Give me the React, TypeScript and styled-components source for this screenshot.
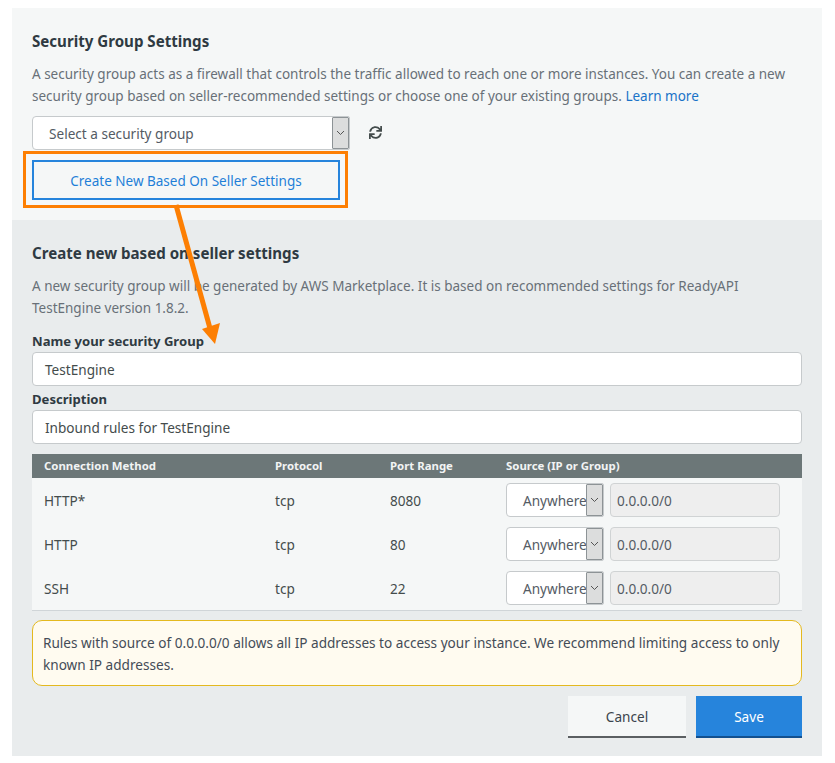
import React from 'react';
import styled, { createGlobalStyle } from 'styled-components';
import { FaSync } from 'react-icons/fa';

const GlobalStyle = createGlobalStyle`
  html, body {
    margin: 0;
    padding: 0;
    background: #fff;
  }
  body {
    font-family: "Noto Sans", "Open Sans", sans-serif;
    font-size: 13.6px;
    color: #444c4c;
  }
`;

const Page = styled.div`
  position: relative;
  width: 835px;
  height: 763px;
  padding: 8px 13px 7px 12px;
  box-sizing: border-box;
  overflow: hidden;
`;

const TopSection = styled.section`
  height: 212px;
  box-sizing: border-box;
  padding: 22px 20px 0;
  background: #f5f7f7;
`;

const BottomSection = styled.section`
  height: 536px;
  box-sizing: border-box;
  padding: 22px 20px 0;
  background: #e9eced;
`;

const Heading = styled.h2`
  margin: 0;
  font-size: 15.1px;
  line-height: 22px;
  font-weight: 700;
  color: #2f3a42;
`;

const Paragraph = styled.p`
  margin: 11px 0 0;
  font-size: 13.5px;
  line-height: 22px;
  color: #687078;
`;

const LearnMore = styled.a`
  color: #1a73c8;
  text-decoration: none;
`;

const GroupRow = styled.div`
  display: flex;
  align-items: center;
  margin-top: 9px;
`;

const SelectBox = styled.div<{ $width: number }>`
  display: flex;
  width: ${p => p.$width}px;
  height: 34px;
  box-sizing: border-box;
  background: #fff;
  border: 1px solid #c6cacc;
  border-radius: 4px 2px 2px 4px;
  overflow: hidden;
`;

const SelectText = styled.span<{ $inset: number }>`
  flex: 1;
  padding-left: ${p => p.$inset}px;
  font-size: 13.6px;
  line-height: 34px;
  color: #545b64;
  white-space: nowrap;
  overflow: hidden;
`;

const SelectCaret = styled.span`
  display: flex;
  flex: none;
  align-items: center;
  justify-content: center;
  width: 15px;
  background: #dcdddd;
  border: 1px solid #8d9396;
  border-radius: 1px;
`;

const RefreshButton = styled.span`
  display: flex;
  margin-left: 19px;
  margin-top: -2px;
  color: #444c4c;
`;

const OutlineButton = styled.button`
  display: block;
  width: 308px;
  height: 40px;
  margin-top: 10px;
  padding: 2px 0 0;
  background: transparent;
  border: 2px solid #2684dc;
  font-family: inherit;
  font-size: 13.5px;
  color: #1f7fd8;
`;

const FieldLabel = styled.label`
  display: block;
  font-size: 13.1px;
  line-height: 20px;
  font-weight: 700;
  color: #2f3a42;
`;

const FieldInput = styled.div`
  height: 34px;
  margin-top: 1px;
  padding-left: 12px;
  box-sizing: border-box;
  background: #fff;
  border: 1px solid #c6cacc;
  border-radius: 4px;
  font-size: 13.6px;
  line-height: 33px;
  color: #444c4c;
`;

const Field = styled.div<{ $top: number }>`
  margin-top: ${p => p.$top}px;
`;

const RulesTable = styled.div`
  margin-top: 10px;
  background: #f5f7f7;
  border-bottom: 1px solid #d0d5d8;
`;

const gridColumns = `231px 115px 116px 1fr`;

const TableHead = styled.div`
  display: grid;
  grid-template-columns: ${gridColumns};
  height: 24px;
  padding-left: 12px;
  background: #6c7778;
  font-size: 11.4px;
  line-height: 24px;
  font-weight: 700;
  color: #f2f4f4;
`;

const TableRow = styled.div`
  display: grid;
  grid-template-columns: ${gridColumns};
  align-items: center;
  height: 44px;
  padding-left: 12px;
  font-size: 13.6px;
  color: #444c4c;
`;

const SourceCell = styled.div`
  display: flex;
  gap: 6px;
`;

const ReadonlyInput = styled.div`
  width: 170px;
  height: 34px;
  padding-left: 6px;
  box-sizing: border-box;
  background: #eeeeee;
  border: 1px solid #d0d3d4;
  border-radius: 4px;
  font-size: 13.6px;
  line-height: 33px;
  color: #545b64;
`;

const Notice = styled.div`
  margin-top: 9px;
  padding: 11px 10px 9px;
  height: 66px;
  box-sizing: border-box;
  background: #fffbf0;
  border: 1px solid #e4b91f;
  border-radius: 10px;
  font-size: 13.6px;
  line-height: 22px;
  color: #444c57;
`;

const Actions = styled.div`
  display: flex;
  justify-content: flex-end;
  gap: 10px;
  margin-top: 10px;
`;

const ActionButton = styled.button<{ $primary?: boolean }>`
  height: 42px;
  width: ${p => (p.$primary ? 106 : 118)}px;
  padding: 0;
  border: 0;
  border-bottom: 2px solid ${p => (p.$primary ? '#12508f' : '#5b5f62')};
  background: ${p => (p.$primary ? '#2684dc' : '#f5f7f7')};
  color: ${p => (p.$primary ? '#fff' : '#3b444c')};
  font-family: inherit;
  font-size: 13.6px;
`;

const Highlight = styled.div`
  position: absolute;
  left: 23px;
  top: 151px;
  width: 325px;
  height: 57px;
  box-sizing: border-box;
  border: 3px solid #fd7f03;
  pointer-events: none;
`;

const ArrowLayer = styled.svg`
  position: absolute;
  left: 0;
  top: 0;
  pointer-events: none;
`;

const Caret = () => (
  <svg width="9" height="6" viewBox="0 0 9 6" fill="none" stroke="#555" strokeWidth="1">
    <path d="M1 1l3.5 3.5L8 1" />
  </svg>
);

const rules = [
  { method: 'HTTP*', protocol: 'tcp', port: '8080' },
  { method: 'HTTP', protocol: 'tcp', port: '80' },
  { method: 'SSH', protocol: 'tcp', port: '22' },
];

export default function App() {
  return (
    <>
      <GlobalStyle />
      <Page>
        <TopSection>
          <Heading>Security Group Settings</Heading>
          <Paragraph>
            A security group acts as a firewall that controls the traffic allowed to reach one or more instances. You can create a new
            security group based on seller-recommended settings or choose one of your existing groups. <LearnMore>Learn more</LearnMore>
          </Paragraph>
          <GroupRow>
            <SelectBox $width={318}>
              <SelectText $inset={16}>Select a security group</SelectText>
              <SelectCaret><Caret /></SelectCaret>
            </SelectBox>
            <RefreshButton><FaSync size={13} /></RefreshButton>
          </GroupRow>
          <OutlineButton>Create New Based On Seller Settings</OutlineButton>
        </TopSection>
        <BottomSection>
          <Heading>Create new based on seller settings</Heading>
          <Paragraph>
            A new security group will be generated by AWS Marketplace. It is based on recommended settings for ReadyAPI
            <br />
            TestEngine version 1.8.2.
          </Paragraph>
          <Field $top={12}>
            <FieldLabel>Name your security Group</FieldLabel>
            <FieldInput>TestEngine</FieldInput>
          </Field>
          <Field $top={3}>
            <FieldLabel>Description</FieldLabel>
            <FieldInput>Inbound rules for TestEngine</FieldInput>
          </Field>
          <RulesTable>
            <TableHead>
              <span>Connection Method</span>
              <span>Protocol</span>
              <span>Port Range</span>
              <span>Source (IP or Group)</span>
            </TableHead>
            {rules.map(rule => (
              <TableRow key={rule.method}>
                <span>{rule.method}</span>
                <span>{rule.protocol}</span>
                <span>{rule.port}</span>
                <SourceCell>
                  <SelectBox $width={98}>
                    <SelectText $inset={16}>Anywhere</SelectText>
                    <SelectCaret><Caret /></SelectCaret>
                  </SelectBox>
                  <ReadonlyInput>0.0.0.0/0</ReadonlyInput>
                </SourceCell>
              </TableRow>
            ))}
          </RulesTable>
          <Notice>
            Rules with source of 0.0.0.0/0 allows all IP addresses to access your instance. We recommend limiting access to only known IP addresses.
          </Notice>
          <Actions>
            <ActionButton>Cancel</ActionButton>
            <ActionButton $primary>Save</ActionButton>
          </Actions>
        </BottomSection>
        <Highlight />
        <ArrowLayer width="835" height="763" viewBox="0 0 835 763">
          <path d="M176 205L211 332" stroke="#fd7f03" strokeWidth="5" fill="none" />
          <path d="M202 329L220 323L215 344Z" fill="#fd7f03" />
        </ArrowLayer>
      </Page>
    </>
  );
}
